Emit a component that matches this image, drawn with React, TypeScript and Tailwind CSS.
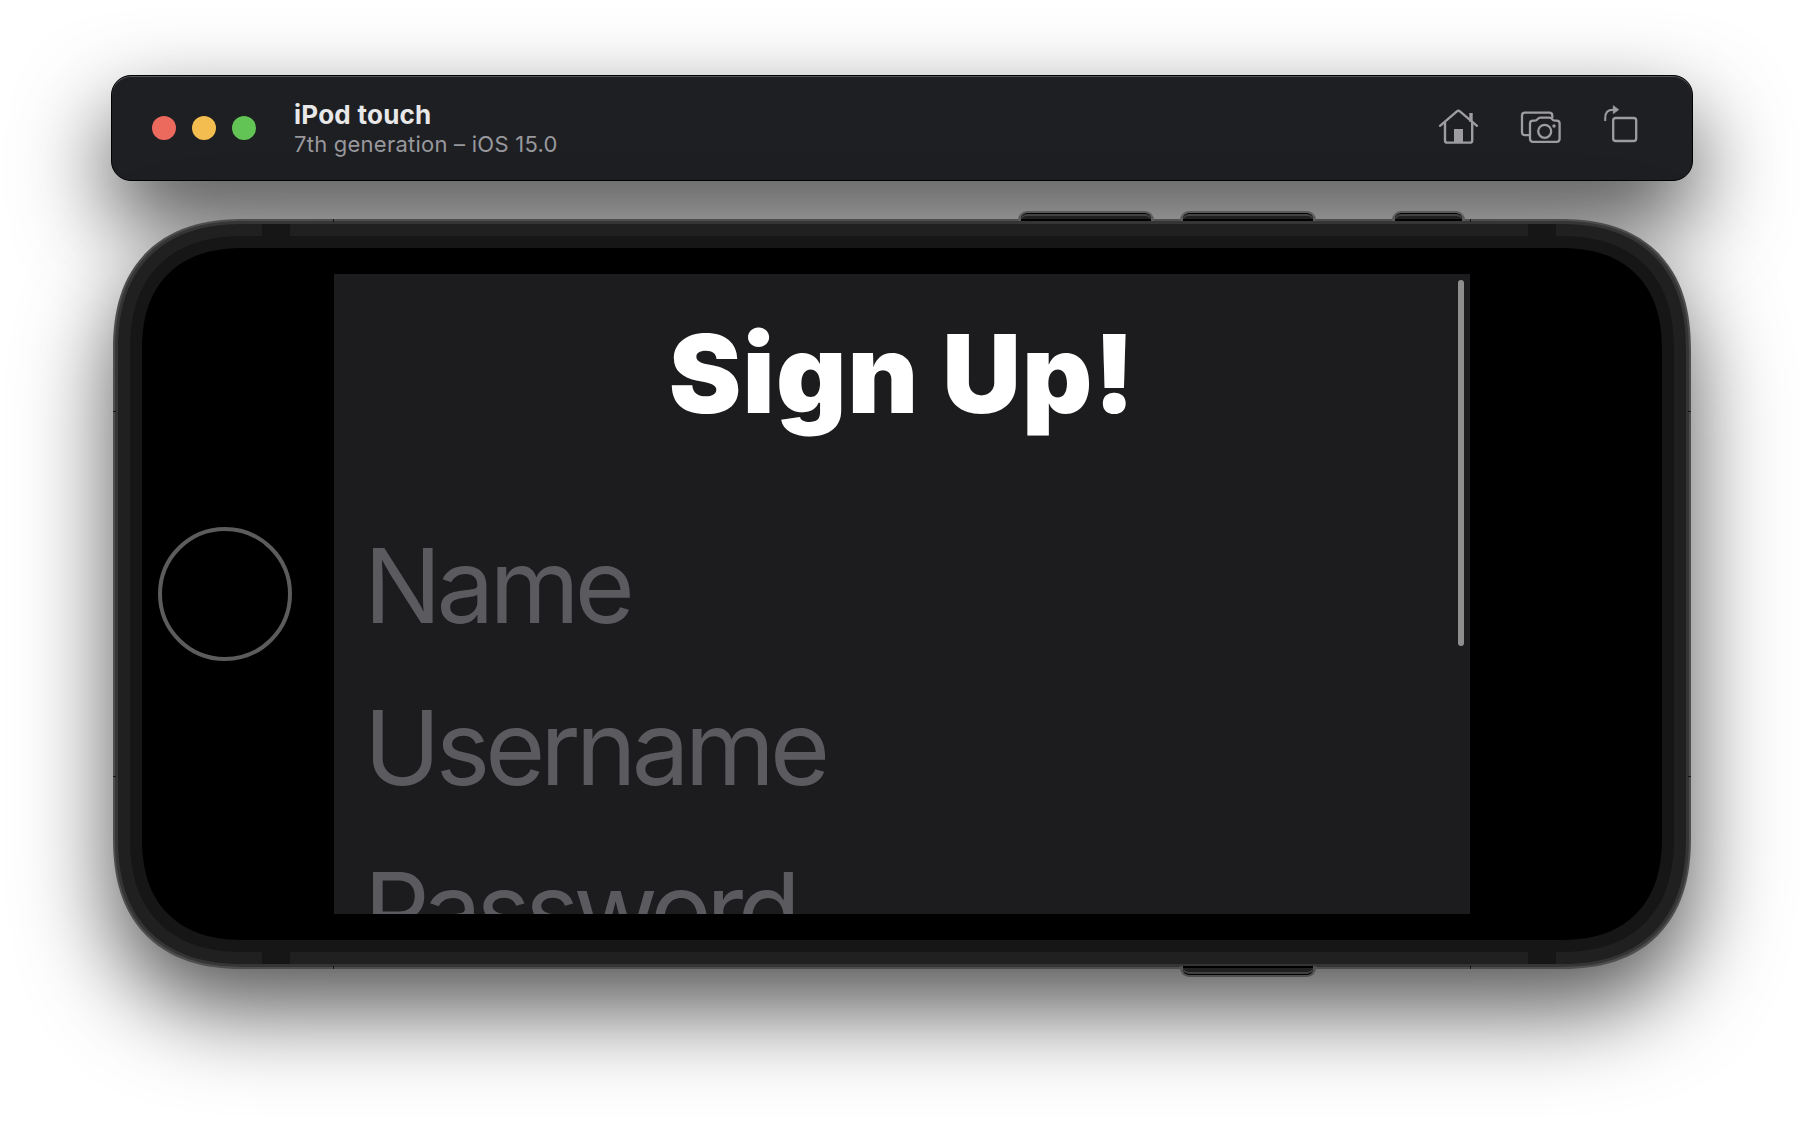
import React from "react";

function TopButton({ className }: { className: string }) {
  return (
    <div className={"absolute top-[211px] h-[10px] rounded-t-[9px] border-x-[3px] border-t-2 border-[#5a5a5a] " + className}>
      <div className="h-full rounded-t-[6px] border-t border-b-2 border-black bg-[#202020] shadow-[inset_0_2px_0_#424242]" />
    </div>
  );
}

function BottomButton({ className }: { className: string }) {
  return (
    <div className={"absolute top-[966px] h-[11px] rounded-b-[9px] border-x-[3px] border-b-2 border-[#505050] " + className}>
      <div className="h-full rounded-b-[6px] border-t-2 border-b border-black bg-[#202020] shadow-[inset_0_-2px_0_#424242]" />
    </div>
  );
}

function HomeIcon() {
  return (
    <svg width="42" height="40" viewBox="0 0 42 40" fill="none" stroke="#9d9da1" strokeWidth="2.4" strokeLinejoin="round" strokeLinecap="round">
      <path d="M2 21.8 L18.9 7.3 Q20.4 6 21.9 7.3 L39 21.8" />
      <path d="M7 18.5 V36.4 Q7 38.6 9.2 38.6 H32 Q34.2 38.6 34.2 36.4 V18.5" />
      <path d="M33 9 V18" strokeWidth="3.4" strokeLinecap="butt" />
      <rect x="16" y="25" width="9" height="14" fill="#9d9da1" stroke="none" />
    </svg>
  );
}

function CameraIcon() {
  return (
    <svg width="42" height="40" viewBox="0 0 42 40" fill="none" stroke="#9d9da1" strokeWidth="2.3" strokeLinejoin="round">
      <path d="M9 31.2 H5 Q2 31.2 2 28.2 V11.6 Q2 8.6 5 8.6 H29.3 Q32.3 8.6 32.3 11.6 V14" />
      <path d="M13 16.6 H15 Q16.5 16.6 17.6 15.1 Q18.8 13.6 20.3 13.6 H29.5 Q31 13.6 32.1 15.1 Q33.2 16.6 34.7 16.6 H36.6 Q39.6 16.6 39.6 19.6 V34.8 Q39.6 37.8 36.6 37.8 H13 Q10 37.8 10 34.8 V19.6 Q10 16.6 13 16.6 Z" />
      <circle cx="24.7" cy="27.3" r="6.5" />
      <circle cx="34" cy="22" r="1.7" fill="#9d9da1" stroke="none" />
    </svg>
  );
}

function RotateIcon() {
  return (
    <svg width="36" height="40" viewBox="0 0 36 40" fill="none" stroke="#9d9da1" strokeWidth="2.3">
      <rect x="11.2" y="14" width="23" height="23" rx="2.6" />
      <path d="M3.2 17 V14 Q3.2 5.7 11 5.7 H12" strokeWidth="2" />
      <path d="M11.2 1.6 L16.8 5.7 L11.2 9.8 Z" fill="#9d9da1" stroke="#9d9da1" strokeWidth="0.6" strokeLinejoin="round" />
    </svg>
  );
}

export default function App() {
  return (
    <div className="relative flex h-[1136px] w-[1804px] flex-col overflow-hidden bg-white pt-[75px] font-['Inter',sans-serif]">
      <header className="relative ml-[111px] flex h-[106px] w-[1582px] items-center rounded-[20px] border border-black bg-[#1e1f23] pr-[54px] pl-[40px] shadow-[inset_0_1px_0_#55575a,0_40px_90px_rgba(0,0,0,0.72)]">
        <div className="flex gap-4">
          <span className="size-6 rounded-full bg-[#ec695e]" />
          <span className="size-6 rounded-full bg-[#f4bd4f]" />
          <span className="size-6 rounded-full bg-[#61c454]" />
        </div>
        <div className="ml-[38px] flex flex-1 flex-col">
          <h2 className="pt-px text-[26px] leading-[32px] font-bold tracking-[0.25px] text-[#e8e8e8]">iPod touch</h2>
          <p className="-mt-px text-[22px] leading-[28px] tracking-[0.24px] text-[#98989d]">7th generation – iOS 15.0</p>
        </div>
        <div className="mb-2 flex items-center gap-10">
          <HomeIcon />
          <CameraIcon />
          <RotateIcon />
        </div>
      </header>

      <main className="relative mt-[38px] ml-[113px] h-[750px] w-[1578px] rounded-[114px] border-2 border-[#4e4e4e] bg-[#353535] p-[3px] shadow-[0_40px_90px_rgba(0,0,0,0.67)] supports-[corner-shape:round]:rounded-[132px] supports-[corner-shape:round]:[corner-shape:superellipse(1.25)]">
        <div className="relative h-full rounded-[109px] bg-[#202020] p-3 supports-[corner-shape:round]:rounded-[127px] supports-[corner-shape:round]:[corner-shape:superellipse(1.25)]">
          <span className="absolute top-0 left-[144px] h-3 w-7 bg-[#161616]" />
          <span className="absolute top-0 right-[130px] h-3 w-7 bg-[#161616]" />
          <span className="absolute bottom-0 left-[144px] h-3 w-7 bg-[#161616]" />
          <span className="absolute right-[130px] bottom-0 h-3 w-7 bg-[#161616]" />
          <div className="h-full rounded-[97px] bg-[#161616] p-3 supports-[corner-shape:round]:rounded-[115px] supports-[corner-shape:round]:[corner-shape:superellipse(1.25)]">
            <div className="flex h-full items-center rounded-[85px] bg-black supports-[corner-shape:round]:rounded-[103px] supports-[corner-shape:round]:[corner-shape:superellipse(1.25)]">
              <div className="ml-4 size-[134px] rounded-full border-4 border-[#5c5c5c]" />
              <section className="relative ml-[42px] h-[640px] w-[1136px] overflow-hidden bg-[#1c1c1e]">
                <h1 className="pt-[33px] pl-px text-center text-[109px] leading-[132px] font-black tracking-[1.1px] text-white">Sign Up!</h1>
                <div className="mt-[66px] flex flex-col pl-[30px] text-[103px] leading-[162px] text-[#5b5b5f]">
                  <div className="tracking-[-5px]">Name</div>
                  <div className="tracking-[-4.9px]">Username</div>
                  <div className="tracking-[-5.7px]">Password</div>
                </div>
                <div className="absolute top-[6px] right-[6px] h-[366px] w-[6px] rounded-full bg-[#8e8e8e]" />
              </section>
            </div>
          </div>
        </div>
        <span className="absolute -top-0.5 left-[218px] h-[3px] w-px bg-black/70" />
        <span className="absolute -top-0.5 right-[218px] h-[3px] w-px bg-black/70" />
        <span className="absolute -bottom-0.5 left-[218px] h-[3px] w-px bg-black/70" />
        <span className="absolute right-[218px] -bottom-0.5 h-[3px] w-px bg-black/70" />
        <span className="absolute top-[190px] -left-0.5 h-px w-[3px] bg-black/70" />
        <span className="absolute top-[190px] -right-0.5 h-px w-[3px] bg-black/70" />
        <span className="absolute top-[555px] -left-0.5 h-px w-[3px] bg-black/70" />
        <span className="absolute top-[555px] -right-0.5 h-px w-[3px] bg-black/70" />
      </main>

      <TopButton className="left-[1018px] w-[136px]" />
      <TopButton className="left-[1180px] w-[136px]" />
      <TopButton className="left-[1392px] w-[73px]" />
      <BottomButton className="left-[1180px] w-[136px]" />
    </div>
  );
}
